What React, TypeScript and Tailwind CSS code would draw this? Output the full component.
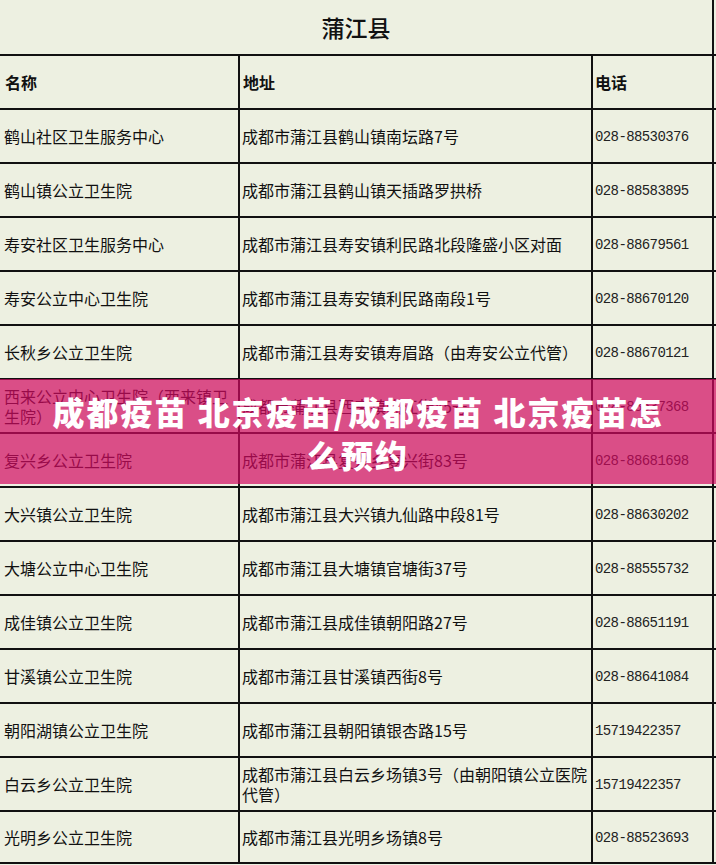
import React from "react";

type Row = { name: string; addr: string; phone: string };

const rows: Row[] = [
  { name: "鹤山社区卫生服务中心", addr: "成都市蒲江县鹤山镇南坛路7号", phone: "028-88530376" },
  { name: "鹤山镇公立卫生院", addr: "成都市蒲江县鹤山镇天插路罗拱桥", phone: "028-88583895" },
  { name: "寿安社区卫生服务中心", addr: "成都市蒲江县寿安镇利民路北段隆盛小区对面", phone: "028-88679561" },
  { name: "寿安公立中心卫生院", addr: "成都市蒲江县寿安镇利民路南段1号", phone: "028-88670120" },
  { name: "长秋乡公立卫生院", addr: "成都市蒲江县寿安镇寿眉路（由寿安公立代管）", phone: "028-88670121" },
  { name: "西来公立中心卫生院（西来镇卫生院）", addr: "成都市蒲江县西来镇临江街45号", phone: "028-88537368" },
  { name: "复兴乡公立卫生院", addr: "成都市蒲江县复兴乡复兴街83号", phone: "028-88681698" },
  { name: "大兴镇公立卫生院", addr: "成都市蒲江县大兴镇九仙路中段81号", phone: "028-88630202" },
  { name: "大塘公立中心卫生院", addr: "成都市蒲江县大塘镇官塘街37号", phone: "028-88555732" },
  { name: "成佳镇公立卫生院", addr: "成都市蒲江县成佳镇朝阳路27号", phone: "028-88651191" },
  { name: "甘溪镇公立卫生院", addr: "成都市蒲江县甘溪镇西街8号", phone: "028-88641084" },
  { name: "朝阳湖镇公立卫生院", addr: "成都市蒲江县朝阳镇银杏路15号", phone: "15719422357" },
  { name: "白云乡公立卫生院", addr: "成都市蒲江县白云乡场镇3号（由朝阳镇公立医院代管）", phone: "15719422357" },
  { name: "光明乡公立卫生院", addr: "成都市蒲江县光明乡场镇8号", phone: "028-88523693" },
];

function TableRow({ row, last }: { row: Row; last: boolean }) {
  return (
    <div
      className={`grid h-[54px] grid-cols-[240px_353px_121px] border-t-2 border-[#111] ${last ? "border-b-2" : ""}`}
    >
      <div className="flex items-center border-r-2 border-[#111] pl-[4px] pr-[8px] leading-[20px]">
        {row.name}
      </div>
      <div className="flex items-center border-r-2 border-[#111] pl-[2px] pr-[4px] leading-[20px]">
        {row.addr}
      </div>
      <div className="flex items-center border-r-2 border-[#111] pl-[2px] pt-[2px] font-['Liberation_Mono',monospace] text-[14px] tracking-[-0.6px] text-[#222]">
        {row.phone}
      </div>
    </div>
  );
}

export default function App() {
  return (
    <div className="relative h-[865px] w-[716px] overflow-hidden bg-[#edf0e1] font-['Noto_Sans_CJK_SC',sans-serif] text-[16px] text-[#111]">
      {/* title */}
      <div className="flex h-[54px] w-[714px] items-center justify-center border-r-2 border-[#111] text-[23px] font-medium">
        蒲江县
      </div>

      {/* header */}
      <div className="grid h-[54px] grid-cols-[240px_353px_121px] border-t-2 border-[#111] font-bold">
        <div className="flex items-center border-r-2 border-[#111] pl-[5px]">名称</div>
        <div className="flex items-center border-r-2 border-[#111] pl-[3px]">地址</div>
        <div className="flex items-center border-r-2 border-[#111] pl-[2px]">电话</div>
      </div>

      {rows.map((r, i) => (
        <TableRow key={i} row={r} last={i === rows.length - 1} />
      ))}

      {/* overlay banner */}
      <div className="absolute left-0 top-[379px] flex h-[105px] w-[716px] items-center justify-center bg-[#d10961]/70 px-[10px] pt-[2px] text-center">
        <p className="text-[32px] font-black leading-[43px] tracking-[2px] text-white">
          成都疫苗 北京疫苗/成都疫苗 北京疫苗怎
          <br />
          么预约
        </p>
      </div>
    </div>
  );
}
